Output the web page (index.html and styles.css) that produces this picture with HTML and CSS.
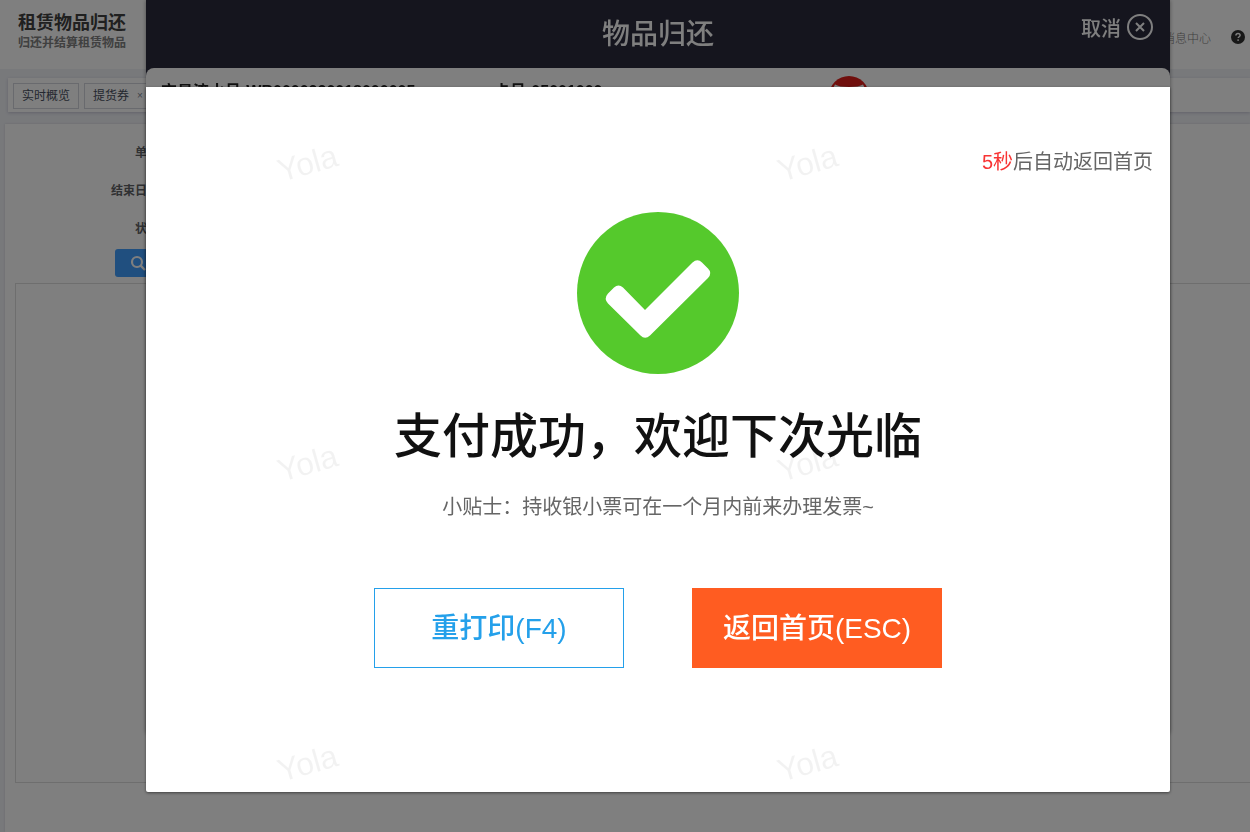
FILE: index.html
```
<!DOCTYPE html>
<html lang="zh-CN">
<head>
<meta charset="utf-8">
<meta name="viewport" content="width=device-width, initial-scale=1">
<title>物品归还</title>
<link rel="stylesheet" href="styles.css">
</head>
<body>
<div class="page">
  <header class="topbar">
    <div class="topbar-titles">
      <h1 class="topbar-title">租赁物品归还</h1>
      <p class="topbar-subtitle">归还并结算租赁物品</p>
    </div>
    <div class="topbar-actions">
      <a class="topbar-link" href="#messages">消息中心</a>
      <a class="help" href="#help" aria-label="帮助">
        <svg viewBox="0 0 14 14" width="14" height="14" aria-hidden="true"><circle cx="7" cy="7" r="7" fill="#303030"/><path d="M4.9 5.5C5 4.2 5.8 3.5 7 3.5s2.1.7 2.1 1.8c0 1.4-1.9 1.5-1.9 2.8" fill="none" stroke="#fff" stroke-width="1.5"/><circle cx="7.1" cy="10.1" r=".9" fill="#fff"/></svg>
      </a>
    </div>
  </header>
  <nav class="tabs">
    <a class="tab" href="#overview">实时概览</a>
    <a class="tab" href="#voucher">提货券<span class="tab-close">×</span></a>
  </nav>
  <main class="panel">
    <form class="filters">
      <div class="field"><label class="field-label" for="order">单号</label><input class="field-input" id="order" type="text"></div>
      <div class="field"><label class="field-label" for="end">结束日期</label><input class="field-input" id="end" type="text"></div>
      <div class="field"><label class="field-label" for="state">状态</label><input class="field-input" id="state" type="text"></div>
      <button class="search" type="button">
        <svg viewBox="0 0 16 16" width="16" height="16" aria-hidden="true"><circle cx="7" cy="7" r="5" fill="none" stroke="#fff" stroke-width="2.2"/><path d="M10.700 10.700l4.300 4.300" stroke="#fff" stroke-width="2.4"/></svg>
        查询
      </button>
    </form>
    <div class="results"></div>
  </main>
</div>

<div class="layer">
  <section class="return-dialog">
    <header class="return-head">
      <h2 class="return-title">物品归还</h2>
      <button class="cancel" type="button">取消
        <svg viewBox="0 0 28 28" width="28" height="28" aria-hidden="true"><circle cx="14" cy="14" r="12" fill="none" stroke="#fff" stroke-width="2"/><path d="M10 10l8 8M18 10l-8 8" stroke="#fff" stroke-width="2"/></svg>
      </button>
    </header>
    <div class="return-body">
      <span class="info">交易流水号:WR0000220018000005</span>
      <span class="info">卡号:05001000</span>
      <svg class="brand" viewBox="0 0 40 40" width="40" height="40" aria-hidden="true"><circle cx="20" cy="20" r="20" fill="#e01f1a"/><path d="M6 8.500q4 2.500 14 2.500t14-2.500l3 6v14H3V14.500z" fill="#fff"/></svg>
    </div>
  </section>
</div>

<div class="layer layer-mask">
  <section class="result" role="dialog" aria-labelledby="result-title">
    <p class="countdown"><span class="seconds">5秒</span>后自动返回首页</p>
    <svg class="success" viewBox="0 0 162 162" width="162" height="162" aria-hidden="true">
      <circle cx="81" cy="81" r="81" fill="#55c92c"/>
      <path d="M31 81.500L37 75.500Q41.500 71.500 46 75.500L68 98L115.500 50.500Q120.500 46 125 50.500L131 56.500Q135.500 61 131 66L73 123.500Q68 128 63.500 123.500L31 91.500Q26.500 86.500 31 81.500Z" fill="#fff"/>
    </svg>
    <h2 class="result-title" id="result-title">支付成功，欢迎下次光临</h2>
    <p class="tip">小贴士：持收银小票可在一个月内前来办理发票~</p>
    <div class="actions">
      <button class="action action-outline" type="button">重打印(F4)</button>
      <button class="action action-solid" type="button">返回首页(ESC)</button>
    </div>
    <div class="watermarks" aria-hidden="true">
      <span class="watermark">Yola</span><span class="watermark">Yola</span>
      <span class="watermark">Yola</span><span class="watermark">Yola</span>
      <span class="watermark">Yola</span><span class="watermark">Yola</span>
    </div>
  </section>
</div>
</body>
</html>
```
FILE: styles.css
```
* {
  box-sizing: border-box;
}

body {
  margin: 0;
  overflow: hidden;
  font-family: "Liberation Sans", "Noto Sans CJK SC", sans-serif;
  color: #333;
  background: #f0f2f7;
}

h1, h2, p {
  margin: 0;
}

button {
  font-family: inherit;
  cursor: pointer;
}

a {
  color: inherit;
  text-decoration: none;
}

/* Page */
.page {
  display: flex;
  flex-direction: column;
  min-height: 100vh;
}

.topbar {
  display: flex;
  justify-content: space-between;
  height: 69px;
  padding: 11px 5px 0 18px;
  background: #fff;
}

.topbar-title {
  font-size: 18px;
  line-height: 24px;
  color: #404040;
}

.topbar-subtitle {
  font-size: 12px;
  font-weight: bold;
  line-height: 16px;
  color: #808080;
}

.topbar-actions {
  display: flex;
  align-items: center;
  gap: 20px;
  height: 52px;
}

.topbar-link {
  font-family: "Noto Sans CJK SC", sans-serif;
  font-size: 12px;
  font-weight: 300;
  color: #808080;
}

.help {
  display: flex;
}

.tabs {
  display: flex;
  gap: 5px;
  margin: 9px 0 0 8px;
  padding: 5px;
  height: 34px;
  background: #fff;
  box-shadow: 0 1px 3px #c4c4d4;
}

.tab {
  display: flex;
  align-items: center;
  padding: 0 8px;
  height: 26px;
  border: 1px solid #d2d4dc;
  font-size: 12px;
  line-height: 24px;
  color: #495060;
}

.tab-close {
  padding-left: 8px;
  font-size: 10px;
  color: #808695;
}

.panel {
  flex: 1;
  margin: 12px 0 0 5px;
  padding: 8px 0 0 10px;
  background: #fff;
  box-shadow: 0 0 2px #d0d0d8;
}

.field {
  display: flex;
  align-items: center;
  gap: 10px;
  height: 38px;
}

.field-label {
  width: 144px;
  font-size: 12px;
  font-weight: bold;
  text-align: right;
  color: #606266;
}

.field-input {
  width: 200px;
  height: 28px;
  border: 1px solid #dcdee2;
}

.search {
  display: flex;
  align-items: center;
  gap: 6px;
  height: 28px;
  margin: 3px 0 6px 100px;
  padding: 0 15px;
  border: 0;
  border-radius: 3px;
  font-size: 12px;
  color: #fff;
  background: #409eff;
}

.results {
  height: 500px;
  border: 1px solid #dcdcdc;
  border-right: 0;
}

/* Layers */
.layer {
  position: fixed;
  inset: 0;
  padding: 0 80px 0 146px;
}

.layer-mask {
  padding-top: 87px;
  background: rgba(0, 0, 0, 0.5);
}

/* Return dialog */
.return-dialog {
  height: 736px;
  border-radius: 0 0 6px 6px;
  background: #2b2b3d;
  box-shadow: 0 0 4px rgba(0, 0, 0, 0.4);
}

.return-head {
  display: grid;
  grid-template-columns: 1fr auto 1fr;
  height: 68px;
  padding: 0 16px;
}

.return-title {
  grid-column: 2;
  font-size: 28px;
  font-weight: 500;
  line-height: 70px;
  color: #fff;
}

.cancel {
  display: flex;
  align-items: center;
  justify-self: end;
  gap: 5px;
  height: 54px;
  padding: 0;
  border: 0;
  font-size: 20px;
  font-weight: 500;
  color: #fff;
  background: none;
}

.return-body {
  display: grid;
  grid-template-columns: 333px 335px 1fr;
  align-items: start;
  height: 668px;
  padding: 8px 15px;
  border-radius: 8px;
  background: #fff;
}

.info {
  padding-top: 4px;
  font-size: 16px;
  font-weight: bold;
  line-height: 24px;
  color: #222;
}

/* Payment result */
.result {
  position: relative;
  display: flex;
  flex-direction: column;
  align-items: center;
  padding: 60px 17px 124px;
  border-radius: 0 0 2px 2px;
  background: #fff;
  box-shadow: 0 1px 3px rgba(0, 0, 0, 0.5);
}

.countdown {
  align-self: flex-end;
  font-size: 20px;
  line-height: 30px;
  color: #666;
}

.seconds {
  color: #f83434;
}

.success {
  margin-top: 35px;
}

.result-title {
  margin-top: 31px;
  font-size: 48px;
  font-weight: 500;
  line-height: 64px;
  color: #111;
}

.tip {
  margin-top: 23px;
  font-size: 20px;
  line-height: 30px;
  color: #666;
}

.actions {
  display: flex;
  gap: 68px;
  margin-top: 66px;
}

.action {
  width: 250px;
  height: 80px;
  padding: 0 0 4px;
  border: 1px solid #24a0ea;
  font-size: 28px;
  font-weight: 500;
  color: #24a0ea;
  background: #fff;
}

.action-solid {
  border-color: #ff5c21;
  color: #fff;
  background: #ff5c21;
}

.watermarks {
  position: absolute;
  inset: 0;
  display: grid;
  grid-template-columns: repeat(2, 500px);
  grid-auto-rows: 300px;
  overflow: hidden;
  pointer-events: none;
}

.watermark {
  padding: 58px 0 0 131px;
  font-size: 32px;
  line-height: 36px;
  color: rgba(0, 0, 0, 0.05);
  transform: rotate(-16deg);
  transform-origin: 162px 76px;
}
```
